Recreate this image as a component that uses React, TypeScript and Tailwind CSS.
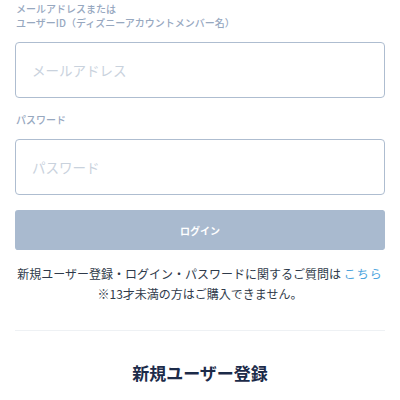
export default function App() {
  return (
    <div
      className="w-[400px] h-[400px] overflow-hidden bg-white px-[15px]"
      style={{ fontFamily: '"Noto Sans CJK JP", "Noto Sans", sans-serif' }}
    >
      {/* Email / user ID */}
      <div className="pt-[2px] pl-px text-[10px] leading-[14px] font-medium text-[#97a8bf]">
        <p>メールアドレスまたは</p>
        <p>ユーザーID（ディズニーアカウントメンバー名）</p>
      </div>
      <input
        type="text"
        placeholder="メールアドレス"
        className="mt-[12px] block w-full h-[56px] rounded-[4px] border border-[#aebdd0] px-4 text-[13.5px] text-[#333] placeholder:text-[#c9d2dd] outline-none"
      />

      {/* Password */}
      <p className="mt-[15px] pl-px text-[10px] leading-[14px] font-medium text-[#97a8bf]">パスワード</p>
      <input
        type="password"
        placeholder="パスワード"
        className="mt-[12px] block w-full h-[56px] rounded-[4px] border border-[#aebdd0] px-4 text-[13.5px] text-[#333] placeholder:text-[#c9d2dd] outline-none"
      />

      <button className="mt-[15px] block w-full h-[40px] rounded-[3px] bg-[#a9bacf] text-white text-[10px] font-bold">
        ログイン
      </button>

      <div className="mt-[14px] text-center text-[12px] leading-[20px] text-[#2f3a4a]">
        <p>
          新規ユーザー登録・ログイン・パスワードに関するご質問は{' '}
          <span className="text-[#4ea4dd] tracking-[1px]">こちら</span>
        </p>
        <p>※13才未満の方はご購入できません。</p>
      </div>

      <div className="mt-[26px] h-px bg-[#eef1f4]" />

      <h2 className="mt-[30px] text-center text-[17px] leading-[24px] font-bold text-[#1c2b49]">
        新規ユーザー登録
      </h2>
    </div>
  )
}
